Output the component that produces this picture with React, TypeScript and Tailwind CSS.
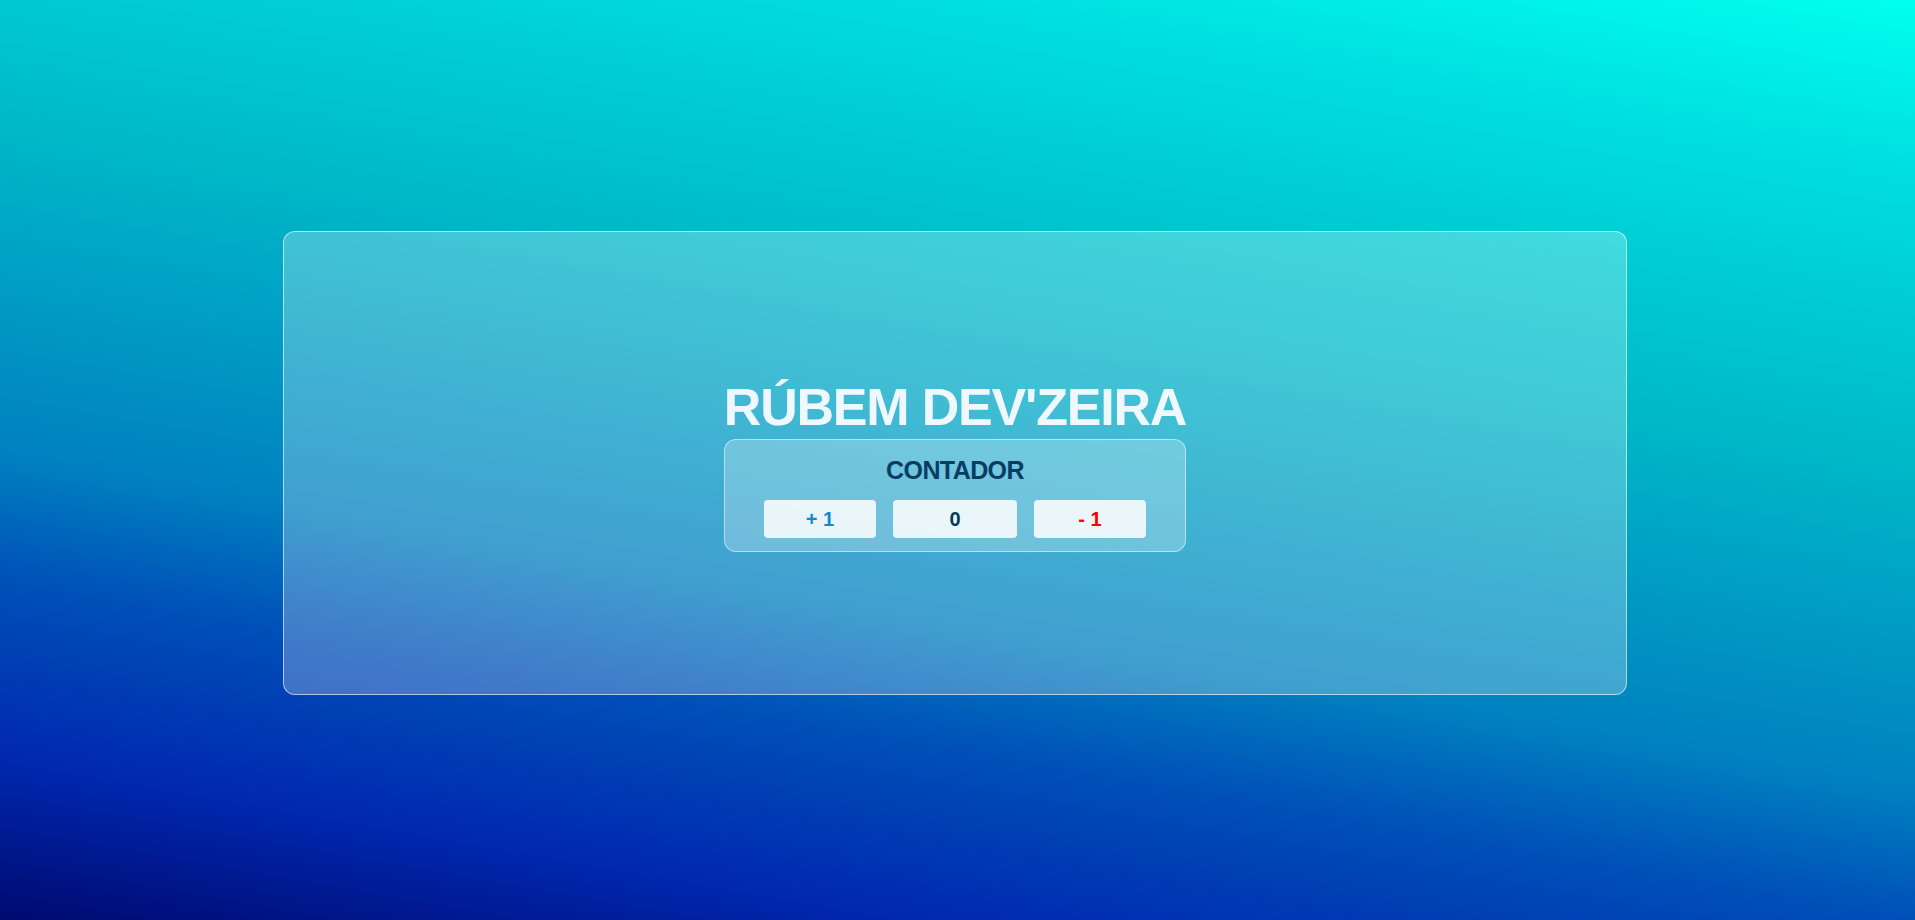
const App = () => {
  return (
    <div
      className="w-full h-screen flex items-center justify-center pt-[6px] pr-[5px] bg-[linear-gradient(10deg,#000a70_0%,#0028b0_13%,#0050b8_27%,#0080c0_37%,#00b8c8_63%,#00c8d0_73%,#00e0e0_87%,#00ffee_100%)]"
      style={{ fontFamily: '"Liberation Sans", Arial, sans-serif' }}
    >
      <div className="w-[1344px] h-[464px] flex items-center justify-center rounded-xl border border-white/60 bg-white/25">
        <div className="flex flex-col items-stretch">
          <h1 className="text-[52px] leading-[64px] font-bold tracking-[-1.2px] text-[#f0f8ff] text-center">
            RÚBEM DEV'ZEIRA
          </h1>
          <div className="flex flex-col items-center rounded-xl border border-white/50 bg-white/25 pt-[16px] pb-[13px]">
            <h2 className="text-[25px] leading-[29px] font-bold tracking-[-0.6px] text-[#083c64]">
              CONTADOR
            </h2>
            <div className="mt-[15px] flex gap-[17px]">
              <button className="w-[112px] h-[38px] rounded bg-white/85 text-[20px] font-bold text-[#1588c8]">
                + 1
              </button>
              <button className="w-[124px] h-[38px] rounded bg-white/85 text-[20px] font-bold text-[#053a5e]">
                0
              </button>
              <button className="w-[112px] h-[38px] rounded bg-white/85 text-[20px] font-bold text-[#ff0000]">
                - 1
              </button>
            </div>
          </div>
        </div>
      </div>
    </div>
  );
};

export default App;
